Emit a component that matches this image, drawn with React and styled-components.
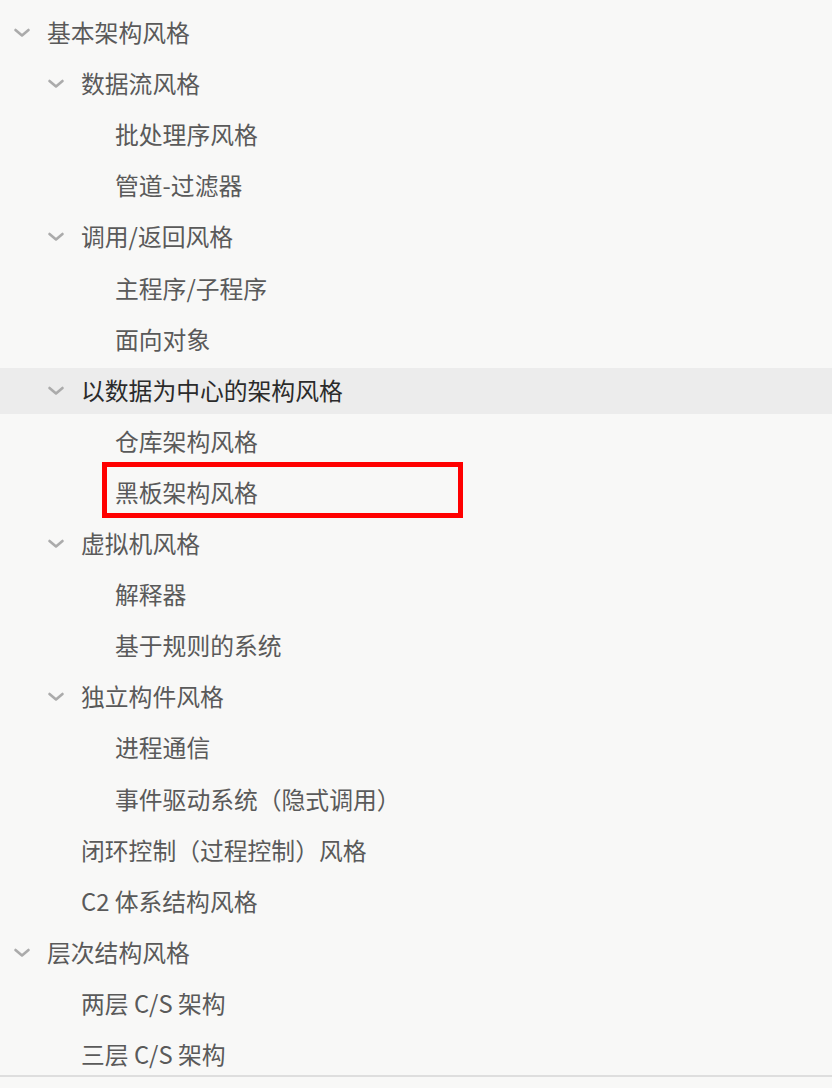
import React from 'react';
import styled, { createGlobalStyle } from 'styled-components';

const GlobalStyle = createGlobalStyle`
  html, body {
    margin: 0;
    padding: 0;
    background: #f8f8f7;
  }
  body {
    font-family: "Noto Sans CJK SC", "Noto Sans", sans-serif;
  }
`;

const Tree = styled.ul`
  list-style: none;
  margin: 0;
  padding: 10px 0 0;
  display: flex;
  flex-direction: column;
  gap: 5.1px;
`;

const Row = styled.li`
  position: relative;
  height: 46px;
  display: flex;
  align-items: center;
  padding-left: ${p => 13 + p.level * 34}px;
  background: ${p => (p.active ? '#ececec' : 'transparent')};
  color: ${p => (p.active ? '#2b2b2b' : '#5a5a5a')};
  font-size: 23.8px;
  font-weight: 400;
  white-space: nowrap;
`;

const Toggle = styled.span`
  width: 18px;
  height: 46px;
  margin-right: 16px;
  display: flex;
  align-items: center;
  justify-content: center;
  flex-shrink: 0;
`;

const Label = styled.span`
  line-height: 1;
  position: relative;
  top: -1px;
`;

const Marker = styled.span`
  position: absolute;
  left: 102px;
  top: -8px;
  width: 361px;
  height: 56px;
  box-sizing: border-box;
  border: 5px solid #ff0000;
  pointer-events: none;
`;

const Divider = styled.div`
  height: 2px;
  margin-top: -3px;
  background: #dedede;
`;

const Chevron = () => (
  <svg width="18" height="10" viewBox="0 0 18 10" fill="none">
    <path d="M2.5 2 L9 7.5 L15.5 2" stroke="#ababab" strokeWidth="2.6" strokeLinecap="round" strokeLinejoin="round" />
  </svg>
);

const items = [
  { text: '基本架构风格', level: 0, open: true },
  { text: '数据流风格', level: 1, open: true },
  { text: '批处理序风格', level: 2 },
  { text: '管道-过滤器', level: 2 },
  { text: '调用/返回风格', level: 1, open: true },
  { text: '主程序/子程序', level: 2 },
  { text: '面向对象', level: 2 },
  { text: '以数据为中心的架构风格', level: 1, open: true, active: true },
  { text: '仓库架构风格', level: 2 },
  { text: '黑板架构风格', level: 2, marked: true },
  { text: '虚拟机风格', level: 1, open: true },
  { text: '解释器', level: 2 },
  { text: '基于规则的系统', level: 2 },
  { text: '独立构件风格', level: 1, open: true },
  { text: '进程通信', level: 2 },
  { text: '事件驱动系统（隐式调用）', level: 2 },
  { text: '闭环控制（过程控制）风格', level: 1 },
  { text: 'C2 体系结构风格', level: 1 },
  { text: '层次结构风格', level: 0, open: true },
  { text: '两层 C/S 架构', level: 1 },
  { text: '三层 C/S 架构', level: 1 },
];

export default function App() {
  return (
    <>
      <GlobalStyle />
      <Tree>
        {items.map((item, i) => (
          <Row key={i} level={item.level} active={item.active}>
            <Toggle>{item.open && <Chevron />}</Toggle>
            <Label>{item.text}</Label>
            {item.marked && <Marker />}
          </Row>
        ))}
      </Tree>
      <Divider />
    </>
  );
}
